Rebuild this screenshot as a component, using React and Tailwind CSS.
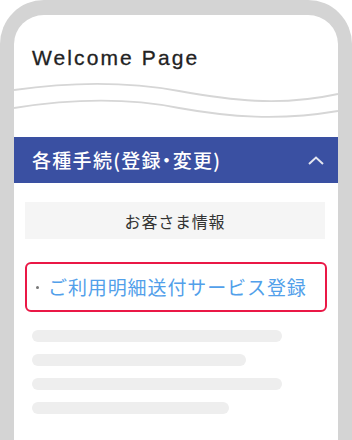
export default function App() {
  const bars = [250, 214, 250, 197];
  return (
    <div className="w-[352px] h-[440px] overflow-hidden bg-white">
      <div className="h-[480px] rounded-t-[44px] border-x-[14px] border-t-[15px] border-[#d4d4d4] bg-white">
        <div className="h-[64px] pt-[30px] pl-[18px]">
          <h1 className="text-[21px] leading-[26px] tracking-[2.1px] text-[#222] font-['Liberation_Sans',Arial,sans-serif] [-webkit-text-stroke:0.3px_#222]">
            Welcome Page
          </h1>
        </div>
        <svg width="324" height="58" viewBox="0 0 324 58" className="block">
          <path d="M0 11 C 50 4, 110 2, 165 12 C 215 21, 265 28, 324 15" fill="none" stroke="#d6d6d6" strokeWidth="1.8" />
          <path d="M0 29 C 50 21, 110 18, 165 29 C 215 38, 265 42, 324 32" fill="none" stroke="#d6d6d6" strokeWidth="1.8" />
        </svg>
        <div className="font-['Noto_Sans_CJK_JP','Noto_Sans',sans-serif]">
          <div className="h-[46px] bg-[#3a50a2] flex items-center justify-between pl-[18px] pr-[14px]">
            <span className="text-white text-[19px] font-medium [font-feature-settings:'palt'] tracking-[1.3px]">
              各種手続(登録・変更)
            </span>
            <svg width="16" height="9" viewBox="0 0 16 9">
              <path d="M1 8 L8 1.5 L15 8" fill="none" stroke="#e4e6f0" strokeWidth="2" />
            </svg>
          </div>
          <div className="mt-[19px] ml-[11px] w-[300px] h-[37px] bg-[#f5f5f5] flex items-center justify-center text-[16px] tracking-[0.8px] text-[#333]">
            お客さま情報
          </div>
          <div className="mt-[23px] ml-[11px] w-[302px] h-[50px] rounded-[6px] border-2 border-[#ea1846] flex items-center pl-[9px]">
            <span className="w-[3px] h-[3px] rounded-full bg-[#777] mr-[9px]" />
            <span className="text-[19px] text-[#52a0ea] tracking-[0.9px]">ご利用明細送付サービス登録</span>
          </div>
          <div className="mt-[18px] ml-[18px] flex flex-col gap-[12px]">
            {bars.map((w, i) => (
              <div key={i} className="h-[12px] rounded-full bg-[#eeeeee]" style={{ width: w }} />
            ))}
          </div>
        </div>
      </div>
    </div>
  );
}
